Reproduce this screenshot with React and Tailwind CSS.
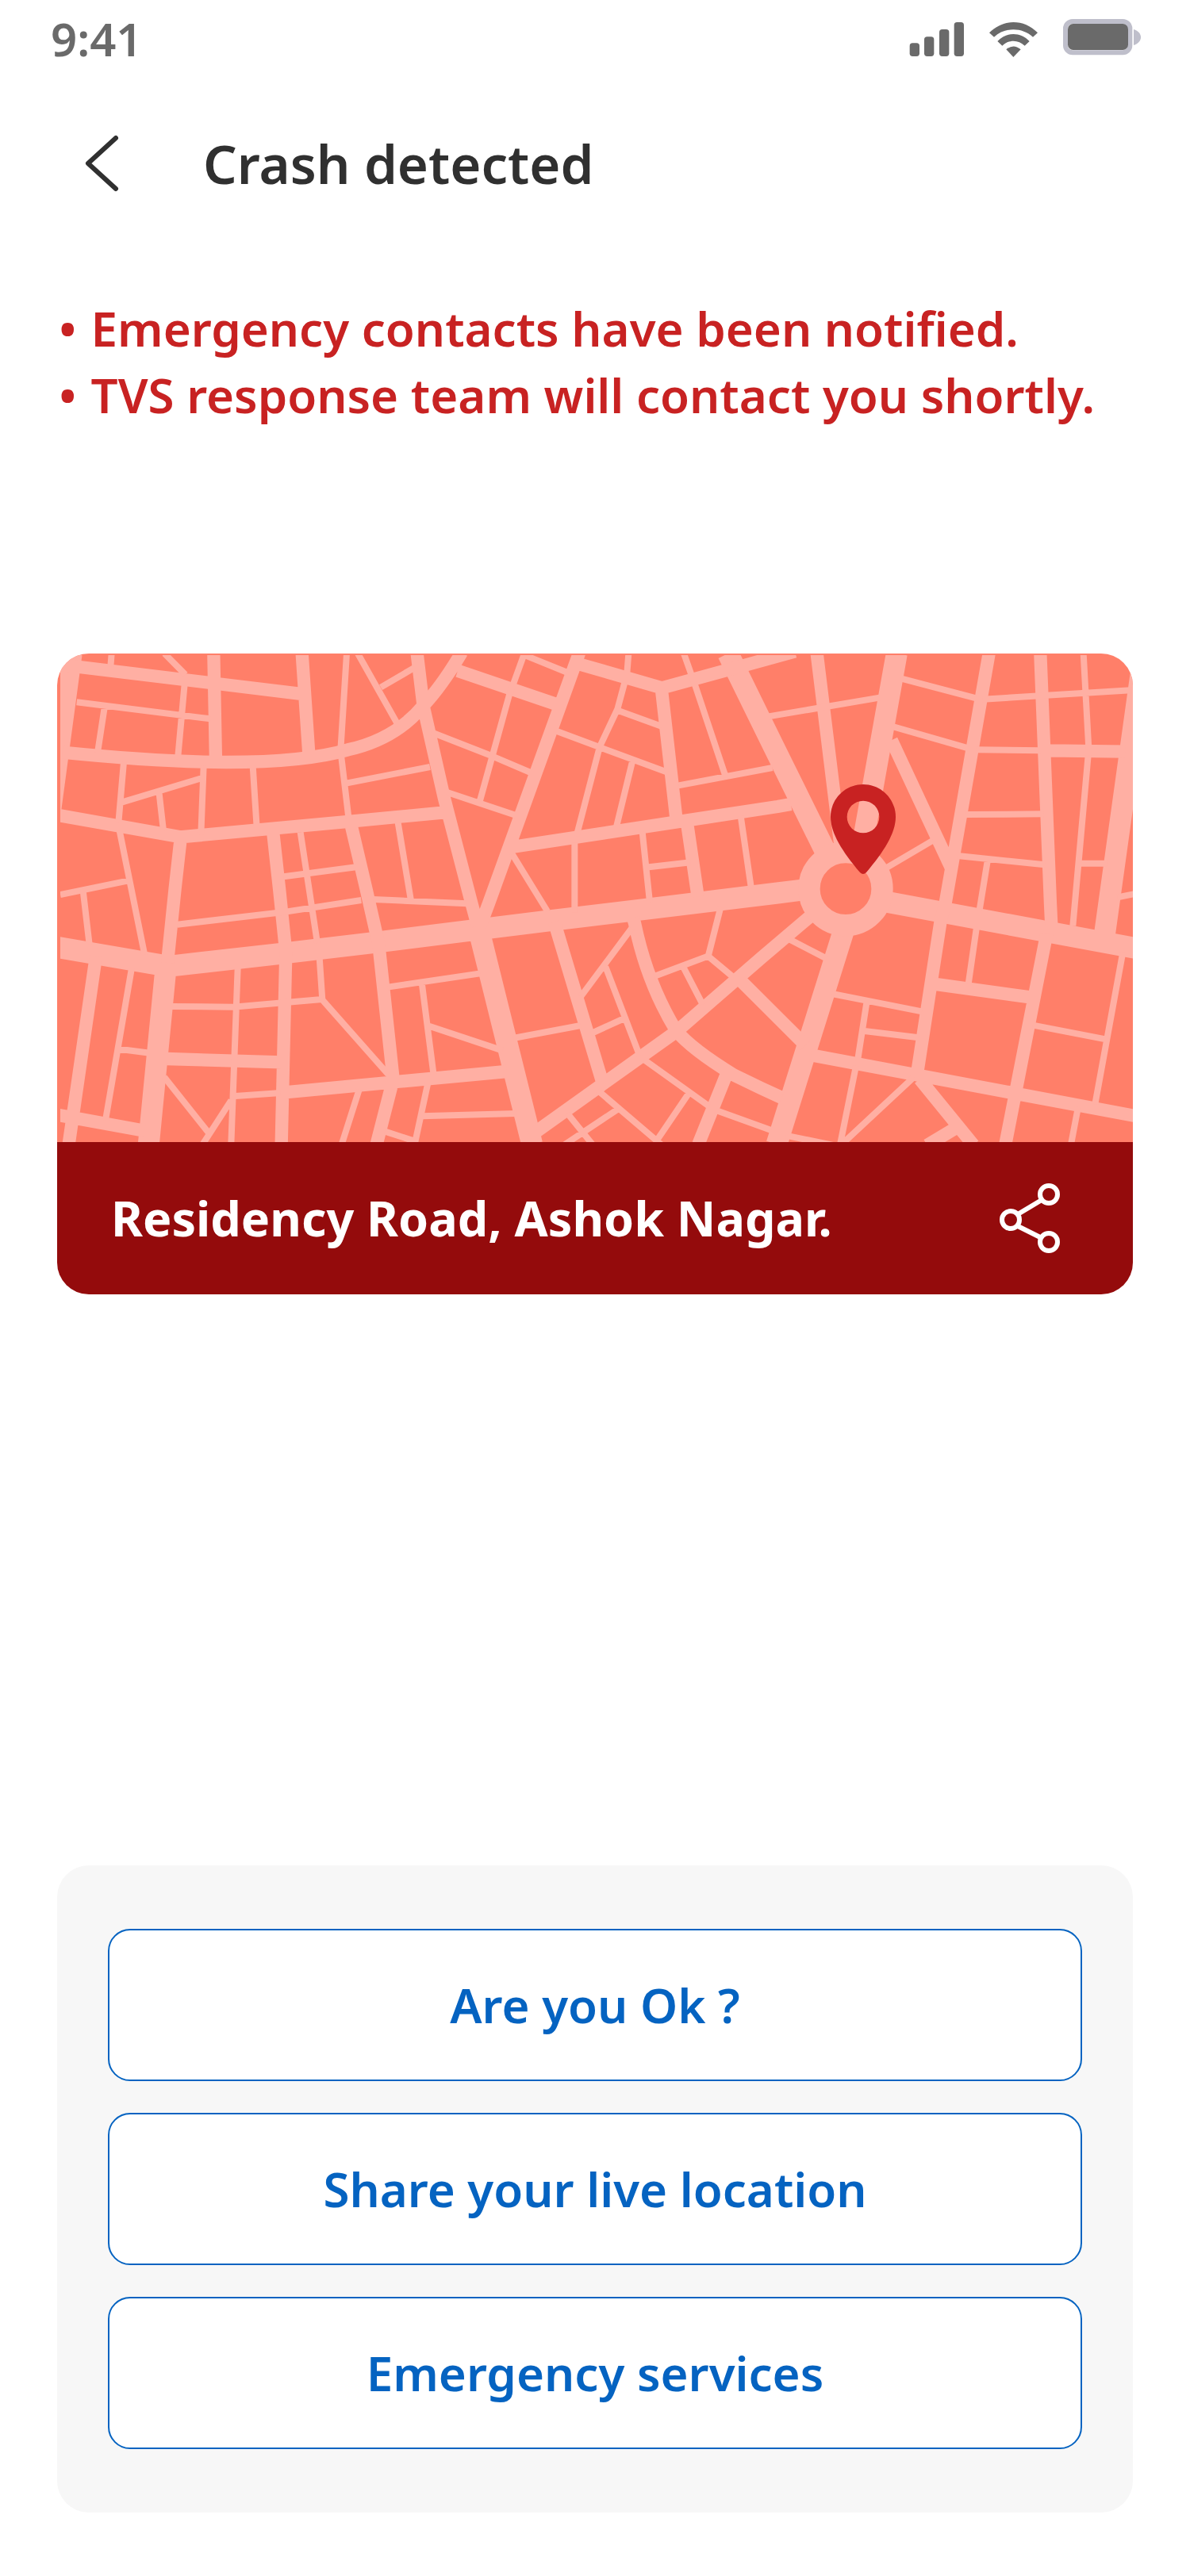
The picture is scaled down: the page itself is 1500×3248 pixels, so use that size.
import React from 'react';

// Street map, one unit = a third of a pixel at full width
const WIDE_ROADS = [
  'M55 -4L-26 600',
  'M0 1111L421 1183L839 1136L1195 1094L1559 1048L1867 1010L2224 967L2724 906L2900 884',
  'M3000 914L4075 1114',
  'M1590 1030L1604 1083L1796 1856',
  'M411 1190L346 1856',
  'M2537 0L2710 353L2900 738L2960 860',
  'M3175 0L3021 860',
  'M4109 0L3955 1107',
  'M2982 1024L2721 1856',
];

const MID_ROADS = [
  'M12 42L934 154',
  'M592 0L600 410',
  'M926 0L952 380',
  'M20 374C300 402 480 411 640 411C860 411 1010 390 1100 364C1230 335 1320 275 1384 198C1430 150 1480 80 1530 -4',
  'M1361 0L1385 200L1464 548L1564 933L1590 1030',
  'M0 611L466 694L1110 635L1465 601',
  'M467 700L446 888L417 1170',
  'M817 680L840 888L865 1130L848 1856',
  'M1112 650L1168 888L1216 1100L1271 1610L1208 1856',
  'M1515 65L1890 193',
  'M1975 -4L1631 948L1600 1030',
  'M1960 36L2287 130L2616 40L2790 -8',
  'M2285 130L2343 640',
  'M2382 640L2423 920',
  'M1720 732L2343 637L2724 579L2775 570',
  'M2873 0L2938 528L2964 740',
  'M3524 0L3360 938L3340 1018L3252 1590',
  'M3155 328L3385 820',
  'M3718 0L3756 948L3760 1030',
  'M3750 367L4040 371',
  'M147 1145L44 1856',
  'M0 1745L330 1805',
  'M415 1533L850 1546',
  'M860 1660L1242 1624L1294 1619L1700 1581',
  'M1880 1015L2060 1615',
  'M1790 1824L2344 1428L2664 1150L2842 999L2900 950',
  'M2178 1000L2184 1020C2215 1170 2270 1310 2340 1425C2385 1480 2470 1540 2560 1595L2664 1645L2740 1680',
  'M2580 1232L2830 1482',
  'M2850 1519L4075 1749',
  'M3262 1610L3465 1859',
  'M3390 1800L3290 1860',
  'M3742 1060L3586 1856',
  'M3310 1249L3685 1301',
  'M2538 1575L2425 1856',
];

const LANES = [
  'M206 0L202 50', 'M406 0L485 80', 'M482 115L456 400', 'M74 184L580 247', 'M179 205L153 375',
  'M1095 0L1072 365', 'M1137 0L1292 275', 'M1224 128L1352 53', 'M252 410L232 640', 'M244 563L548 471',
  'M386 530L402 670', 'M554 425L544 685', 'M740 425L755 658', 'M1074 385L1102 620', 'M1097 490L1410 429',
  'M236 670L331 1140', 'M12 912L266 860', 'M99 905L122 1100', 'M920 676L984 1095', 'M857 844L1130 808',
  'M1289 640L1338 935', 'M1195 930L1284 934L1550 946', 'M454 1025L850 979L1150 933',
  'M1769 -6L1726 113L1710 156L1648 380L1598 560', 'M1772 8L1930 72', 'M2161 0L2155 75',
  'M2370 0L2414 124L2526 460', 'M2146 110L2119 210L2052 352L1964 690', 'M2122 216L2285 275',
  'M1880 290L2053 355L2310 450', 'M2176 405L2115 655', 'M1415 298L1645 388L1790 450', 'M1475 525L1735 612',
  'M1957 715L1957 980', 'M1720 757L1854 975', 'M2213 675L2241 940', 'M2238 808L2395 790',
  'M2585 615L2625 890', 'M2350 499L2705 432', 'M2690 238L3110 167', 'M3190 94L3475 169',
  'M3155 275L3445 358', 'M3130 814L3312 707', 'M3500 173L4060 139', 'M3881 0L3901 360',
  'M3899 385L3841 1030', 'M3475 364L3720 367', 'M3435 609L3730 607', 'M3405 765L3735 799',
  'M3519 780L3488 970', 'M3865 794L3970 794', 'M4010 922L4075 909',
  'M282 1190L183 1765', 'M235 1496L350 1511', 'M435 1335L666 1337L837 1322L1002 1308', 'M992 1150L1003 1310L1252 1592',
  'M683 1190L658 1856', 'M664 1675L845 1662', 'M405 1602L572 1812', 'M658 1690L550 1857', 'M1142 1650L1076 1857',
  'M1240 1808L1355 1845', 'M1402 1625L1352 1857', 'M1380 1750L1735 1740', 'M1250 1262L1600 1210',
  'M1379 1245L1424 1595', 'M1400 1407L1685 1502', 'M1725 1455L1980 1407', 'M2172 1040L1980 1298',
  'M2074 1185L2203 1522', 'M2020 1437L2145 1380', 'M2509 960L2462 1145L2558 1225', 'M2466 1143L2258 1221',
  'M2368 1186L2441 1327', 'M2765 1079L2910 1154', 'M2930 1287L3270 1354', 'M3062 1315L3027 1540',
  'M3053 1428L3258 1453', 'M3021 1560L2961 1857', 'M3240 1602L2970 1854', 'M2755 1823L2945 1862',
  'M3477 1035L3446 1250', 'M3690 1406L3965 1459', 'M4030 1130L3925 1705', 'M3861 1715L3834 1857',
  'M2220 1537L2465 1712', 'M2386 1667L2262 1850', 'M2045 1653L2285 1858', 'M2120 1724L1920 1857',
  'M1930 1740L2027 1860', 'M2490 1727L2700 1803',
];

const ACTIONS = ['Are you Ok ?', 'Share your live location', 'Emergency services'];

const StatusIcons = () => (
  <svg viewBox="0 0 876 144" className="h-12 w-[292px]" role="img" aria-label="Signal, Wi-Fi and battery">
    <g fill="#6a6a6a">
      <rect x="2" y="91" width="37" height="50" rx="11" />
      <rect x="57" y="67" width="37" height="74" rx="11" />
      <rect x="114" y="39" width="37" height="102" rx="11" />
      <rect x="170" y="12" width="37" height="129" rx="11" />
      <path d="M303 52C355 -1 434 -1 486 52L468 68C428 30 361 30 321 68Z" />
      <path d="M334 84C368 48 421 48 455 84L437 101C413 77 376 77 352 101Z" />
      <path d="M367 115Q394 92 422 115L394 144Z" />
    </g>
    <rect x="591" y="9" width="244" height="118" rx="27" fill="#fff" stroke="#bfbfcb" strokeWidth="18" />
    <rect x="600" y="18" width="228" height="99" rx="20" fill="#6a6a6a" />
    <path d="M849 39C867 45 876 56 876 69S867 93 849 99Z" fill="#bfbfcb" />
  </svg>
);

const StreetMap = () => (
  <svg viewBox="0 0 4068 1848" className="block w-full bg-[#ff7f69]" role="img" aria-label="Map of the crash location">
    <clipPath id="streets">
      <rect x="12" y="6" width="4056" height="1842" />
    </clipPath>
    <g clipPath="url(#streets)" fill="none" stroke="#ffafa3" strokeLinejoin="round">
      <path d={WIDE_ROADS.join('')} strokeWidth="81" />
      <path d={MID_ROADS.join('')} strokeWidth="49" />
      <path d={LANES.join('')} strokeWidth="24" />
      <circle cx="2982" cy="890" r="138" fill="#ff7f69" strokeWidth="82" />
    </g>
    <path
      fill="#c82222"
      fillRule="evenodd"
      d="M3048 495C2980 495 2925 550 2925 618C2925 680 2970 750 3036 828Q3048 840 3060 828C3126 750 3171 680 3171 618C3171 550 3116 495 3048 495ZM3048 557A61 61 0 1 1 3048 679A61 61 0 1 1 3048 557Z"
    />
  </svg>
);

const ShareIcon = () => (
  <svg viewBox="0 0 80 92" className="h-[92px] w-[80px]" fill="none" stroke="#fff" strokeWidth="6" aria-hidden="true">
    <circle cx="62" cy="16" r="11" />
    <circle cx="14" cy="48" r="11" />
    <circle cx="62" cy="76" r="11" />
    <path d="M23 41L53 23M23 56L51 70" />
  </svg>
);

export default function App() {
  return (
    <div className="min-h-screen bg-white font-['Noto_Sans','Open_Sans',sans-serif] font-semibold">
      <div className="flex items-start justify-between pl-16 pr-[62px] pt-6">
        <span className="text-[58px] leading-[50px] text-[#6a6a6a]">9:41</span>
        <StatusIcons />
      </div>

      <header className="mt-[84px] flex items-center gap-[102px] pl-[104px]">
        <button type="button" aria-label="Back" className="cursor-pointer">
          <svg viewBox="0 0 50 76" className="h-[76px] w-[50px]" fill="none" stroke="#303030" strokeWidth="6" strokeLinecap="round" strokeLinejoin="round">
            <path d="M42 6L7 38L42 70" />
          </svg>
        </button>
        <h1 className="text-[67px] leading-[96px] text-[#303030]">Crash detected</h1>
      </header>

      <main className="px-[72px] pb-20">
        <ul className="mt-[118px] pl-0.5 text-[60px] leading-[84px] text-[#c82222]">
          <li className="flex gap-[18px]"><span>•</span>Emergency contacts have been notified.</li>
          <li className="flex gap-[18px]"><span>•</span>TVS response team will contact you shortly.</li>
        </ul>

        <section className="mt-[284px] overflow-hidden rounded-[40px]">
          <StreetMap />
          <div className="flex h-48 items-center justify-between bg-[#940b0c] pl-[68px] pr-[88px]">
            <p className="text-[61px] font-bold text-white">Residency Road, Ashok Nagar.</p>
            <button type="button" aria-label="Share location" className="cursor-pointer">
              <ShareIcon />
            </button>
          </div>
        </section>

        <section className="mt-[720px] flex flex-col gap-10 rounded-[40px] bg-[#f7f7f7] px-16 py-20">
          {ACTIONS.map(label => (
            <button
              key={label}
              type="button"
              className="h-48 cursor-pointer rounded-[28px] border-2 border-[#0563c1] bg-white text-[60px] text-[#0563c1]"
            >
              {label}
            </button>
          ))}
        </section>
      </main>
    </div>
  );
}
